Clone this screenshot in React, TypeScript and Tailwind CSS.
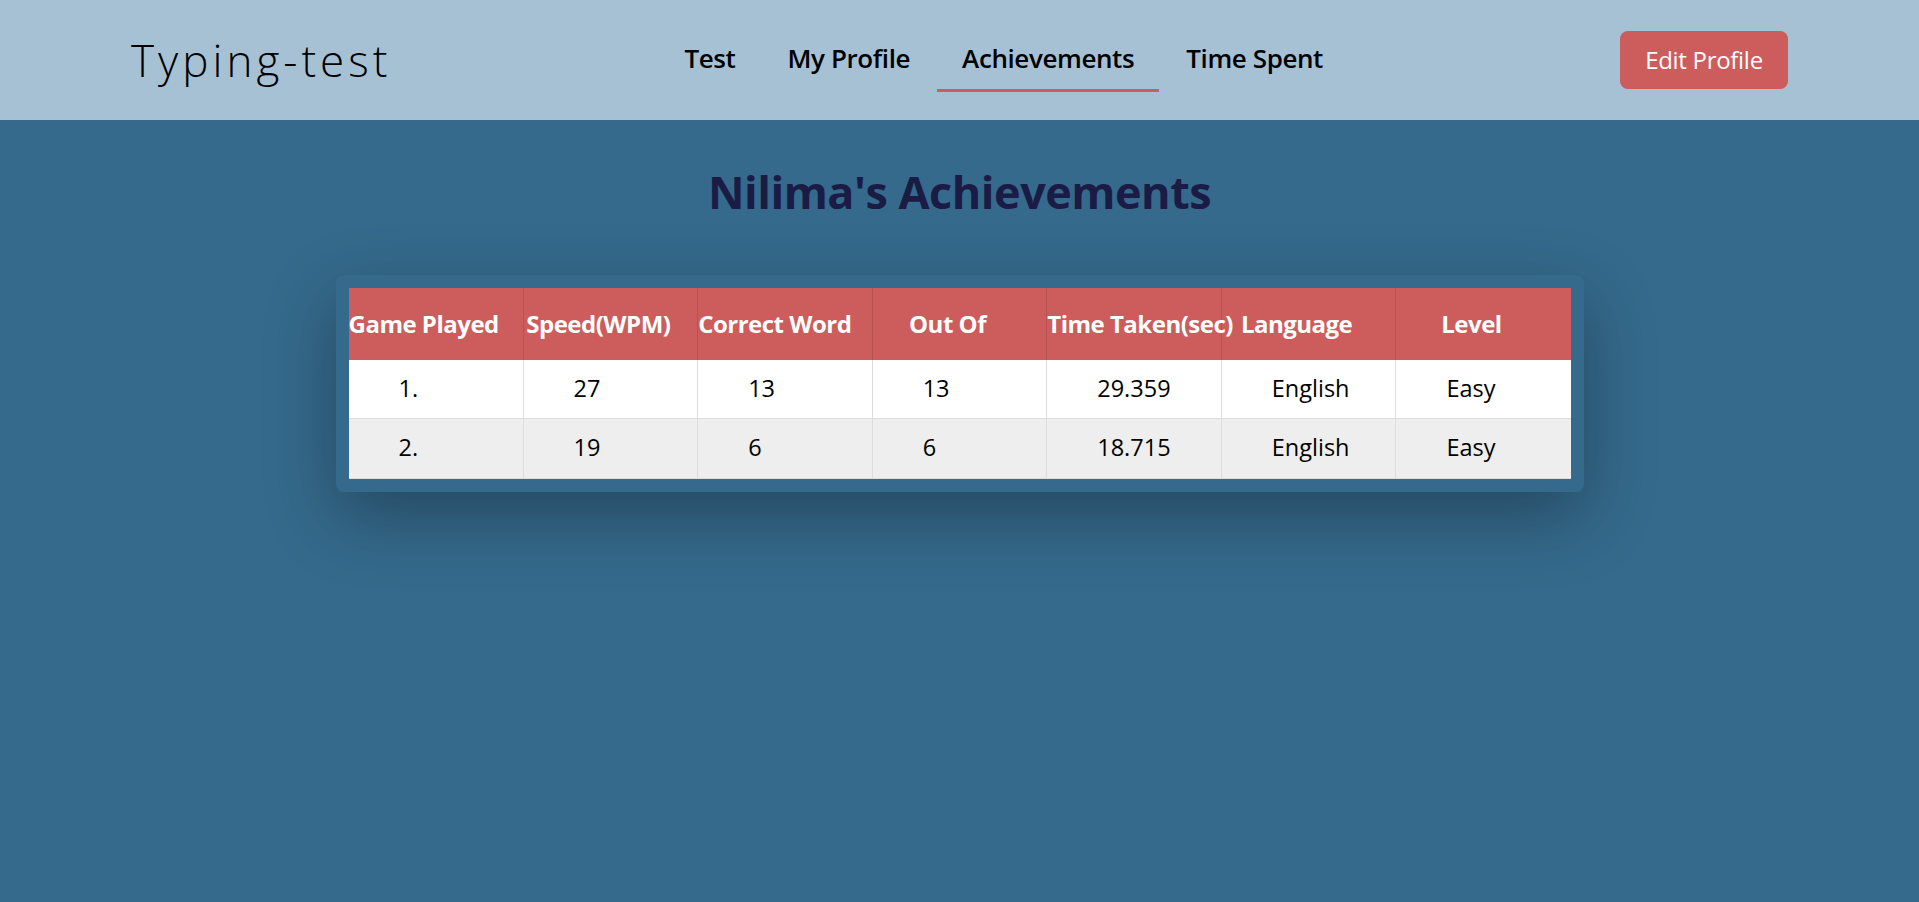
import React from 'react';

const rows = [
  { game: '1.', speed: 27, correct: 13, outOf: 13, time: '29.359', language: 'English', level: 'Easy' },
  { game: '2.', speed: 19, correct: 6, outOf: 6, time: '18.715', language: 'English', level: 'Easy' },
];

const headers = ['Game Played', 'Speed(WPM)', 'Correct Word', 'Out Of', 'Time Taken(sec)', 'Language', 'Level'];

const links = ['Test', 'My Profile', 'Achievements', 'Time Spent'];

export default function App() {
  return (
    <div
      className="min-h-screen bg-[#356a8c]"
      style={{ fontFamily: '"Open Sans", "Noto Sans", sans-serif' }}
    >
      <header className="h-[120px] bg-[#a7c1d4] flex items-center justify-between px-[131px]">
        <span className="text-[44px] font-light tracking-[4px] text-black leading-none">Typing-test</span>
        <nav className="flex items-center gap-[2px] mr-[4px]">
          {links.map((l) => (
            <a
              key={l}
              className={
                'h-[63px] flex items-center px-[25px] text-[26px] font-semibold text-black tracking-[-0.4px] border-b-[3px] ' +
                (l === 'Achievements' ? 'border-[#cd5c5c]' : 'border-transparent')
              }
            >
              {l}
            </a>
          ))}
        </nav>
        <button className="w-[168px] h-[58px] rounded-lg bg-[#cd5c5c] text-white text-[24px] tracking-[-0.3px]">
          Edit Profile
        </button>
      </header>

      <main className="flex flex-col items-center pt-[44px]">
        <h1 className="text-[45px] font-bold text-[#1b1c45] leading-[56px] tracking-[-0.5px]">Nilima's Achievements</h1>

        <div className="mt-[55px] w-[1248px] rounded-lg bg-[#356a8c] p-[13px] shadow-[0_24px_70px_rgba(0,0,0,0.32)]">
          <table className="w-full table-fixed border-collapse">
            <thead>
              <tr className="bg-[#cd5c5c] h-[72px]">
                {headers.map((h) => (
                  <th
                    key={h}
                    className="border-x border-[#b95353] first:border-l-0 last:border-r-0 pr-6 pl-0 text-center text-[24px] font-bold text-white whitespace-nowrap tracking-[-0.5px]"
                  >
                    {h}
                  </th>
                ))}
              </tr>
            </thead>
            <tbody>
              {rows.map((r, i) => (
                <tr key={r.game} className={(i % 2 === 0 ? 'bg-white h-[58px]' : 'bg-[#eeeeee] h-[60px]') + ' border-b border-[#dddddd]'}>
                  {[r.game, r.speed, r.correct, r.outOf, r.time, r.language, r.level].map((v, j) => (
                    <td
                      key={j}
                      className="border-x border-[#dddddd] first:border-l-0 last:border-r-0 pl-[50px] text-left text-[23.5px] text-black"
                    >
                      {v}
                    </td>
                  ))}
                </tr>
              ))}
            </tbody>
          </table>
        </div>
      </main>
    </div>
  );
}
